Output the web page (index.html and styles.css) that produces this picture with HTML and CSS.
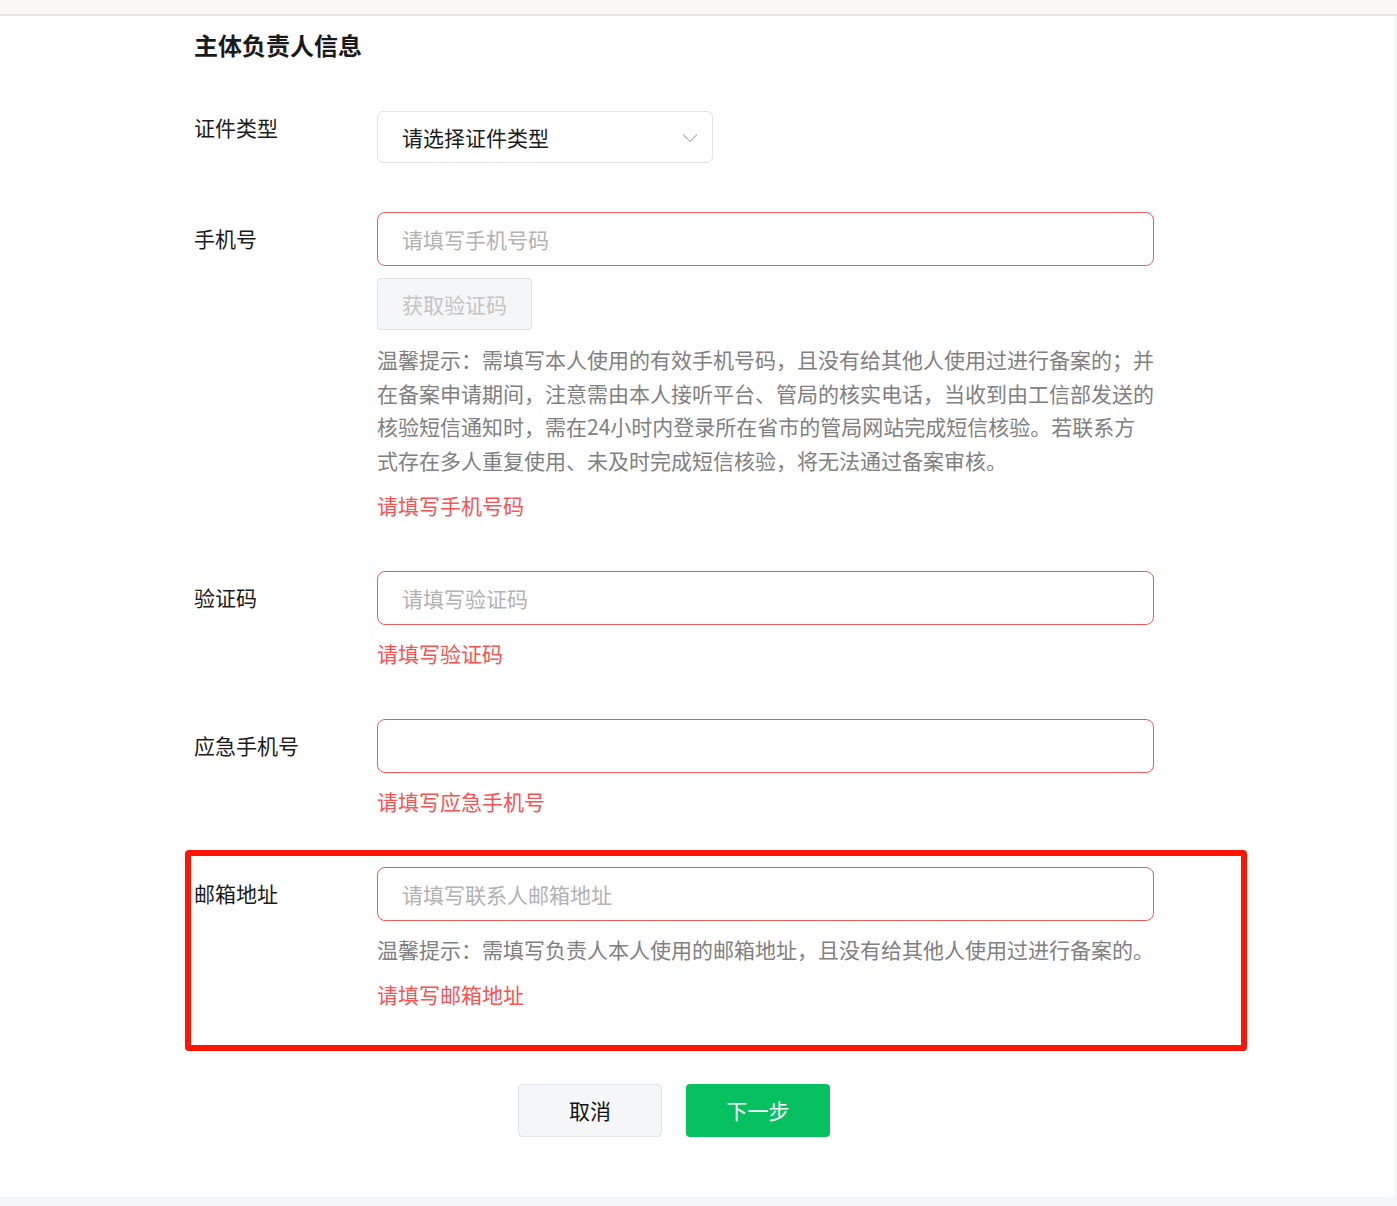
FILE: index.html
```html
<!DOCTYPE html>
<html lang="zh-CN">
<head>
    <meta charset="UTF-8">
    <meta name="viewport" content="width=device-width, initial-scale=1.0">
    <title>主体负责人信息</title>
    <link rel="stylesheet" href="styles.css">
</head>
<body>
    <div class="topbar"></div>
    <div class="card">
        <form class="form">
            <h2 class="section-title">主体负责人信息</h2>

            <div class="row">
                <label class="label label-top">证件类型</label>
                <div class="field">
                    <div class="select">
                        <span>请选择证件类型</span>
                        <svg class="chevron" width="16" height="10" viewBox="0 0 16 10">
                            <polyline points="1,1.5 8,8.5 15,1.5" fill="none" stroke="#b8b8b8" stroke-width="1.2"/>
                        </svg>
                    </div>
                </div>
            </div>

            <div class="row">
                <label class="label">手机号</label>
                <div class="field">
                    <input type="text" class="input input-error" placeholder="请填写手机号码">
                    <button type="button" class="code-btn" disabled>获取验证码</button>
                    <p class="hint">温馨提示：需填写本人使用的有效手机号码，且没有给其他人使用过进行备案的；并在备案申请期间，注意需由本人接听平台、管局的核实电话，当收到由工信部发送的核验短信通知时，需在24小时内登录所在省市的管局网站完成短信核验。若联系方式存在多人重复使用、未及时完成短信核验，将无法通过备案审核。</p>
                    <p class="error">请填写手机号码</p>
                </div>
            </div>

            <div class="row">
                <label class="label">验证码</label>
                <div class="field">
                    <input type="text" class="input input-error" placeholder="请填写验证码">
                    <p class="error">请填写验证码</p>
                </div>
            </div>

            <div class="row">
                <label class="label">应急手机号</label>
                <div class="field">
                    <input type="text" class="input input-error">
                    <p class="error">请填写应急手机号</p>
                </div>
            </div>

            <div class="row row-marked">
                <div class="mark"></div>
                <label class="label">邮箱地址</label>
                <div class="field">
                    <input type="text" class="input input-error" placeholder="请填写联系人邮箱地址">
                    <p class="hint hint-tight">温馨提示：需填写负责人本人使用的邮箱地址，且没有给其他人使用过进行备案的。</p>
                    <p class="error">请填写邮箱地址</p>
                </div>
            </div>

            <div class="actions">
                <button type="button" class="btn btn-cancel">取消</button>
                <button type="button" class="btn btn-next">下一步</button>
            </div>
        </form>
    </div>
</body>
</html>
```

FILE: styles.css
```css
body {
    font-family: "Noto Sans CJK SC", "Noto Sans", sans-serif;
    background-color: #f5f6f7;
    margin: 0;
    padding: 0;
    color: rgba(0, 0, 0, 0.9);
}
.topbar {
    height: 14px;
    background-color: #f9f8f4;
    border-bottom: 2px solid #e6e5e1;
}
.card {
    width: 1394px;
    background-color: #ffffff;
    padding: 13px 0 60px;
    box-sizing: border-box;
    border-radius: 0 0 4px 0;
}
.form {
    width: 960px;
    margin-left: 194px;
}
.section-title {
    margin: 0 0 50px;
    font-size: 24px;
    line-height: 32px;
    font-weight: 600;
    color: #1a1a1a;
}
.row {
    display: flex;
    margin-bottom: 49px;
}
.label {
    width: 183px;
    flex-shrink: 0;
    font-size: 21px;
    line-height: 33px;
    padding-top: 10px;
    color: #1a1a1a;
}
.label-top {
    padding-top: 0;
}
.field {
    width: 777px;
    display: flex;
    flex-direction: column;
    align-items: flex-start;
}
.select {
    width: 336px;
    height: 52px;
    box-sizing: border-box;
    border: 1px solid #e3e3e3;
    border-radius: 6px;
    padding: 0 14px 0 24px;
    display: flex;
    align-items: center;
    justify-content: space-between;
    font-size: 21px;
    color: #1a1a1a;
}
.chevron {
    margin-top: 1px;
}
.input {
    width: 777px;
    height: 54px;
    box-sizing: border-box;
    border: 1px solid #e3e3e3;
    border-radius: 8px;
    padding: 0 24px;
    font-family: inherit;
    font-size: 21px;
    color: #1a1a1a;
    outline: none;
}
.input::placeholder {
    color: #b2b2b2;
}
.input-error {
    border-color: #f25a5a;
}
.code-btn {
    margin-top: 12px;
    width: 155px;
    height: 52px;
    background-color: #f5f6f7;
    border: 1px solid #e3e3e3;
    border-radius: 4px;
    font-family: inherit;
    font-size: 21px;
    color: #c4c4c4;
    padding: 0;
}
.hint {
    margin: 13px 0 0;
    font-size: 21px;
    line-height: 33.5px;
    color: #808080;
}
.hint-tight {
    margin-top: 12px;
}
.error {
    margin: 12px 0 0;
    font-size: 21px;
    line-height: 33px;
    color: #fa5151;
}
.hint-tight + .error {
    margin-top: 11px;
}
.row-marked {
    position: relative;
    margin-bottom: 0;
}
.mark {
    position: absolute;
    left: -9px;
    top: -17px;
    width: 1062px;
    height: 201px;
    box-sizing: border-box;
    border: 6px solid #ff1500;
    border-radius: 4px;
    pointer-events: none;
}
.actions {
    margin-top: 73px;
    display: flex;
    justify-content: center;
    gap: 24px;
}
.btn {
    width: 144px;
    height: 53px;
    border-radius: 4px;
    font-family: inherit;
    font-size: 21px;
    cursor: pointer;
    padding: 0;
}
.btn-cancel {
    background-color: #f5f6f7;
    border: 1px solid #e3e3e3;
    color: #111111;
}
.btn-next {
    background-color: #07c160;
    border: none;
    color: #ffffff;
}
```
